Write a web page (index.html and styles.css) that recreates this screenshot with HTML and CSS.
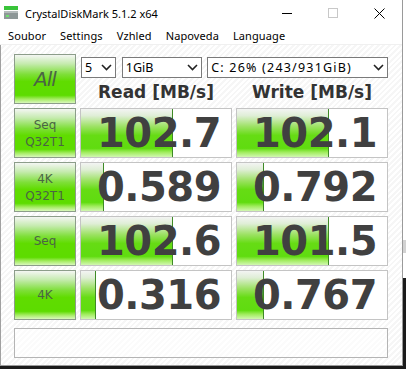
FILE: index.html
```html
<!DOCTYPE html>
<html lang="cs">
<head>
    <meta charset="UTF-8">
    <title>CrystalDiskMark 5.1.2 x64</title>
    <link rel="stylesheet" href="styles.css">
</head>
<body>
    <div class="window">
        <!-- Title bar -->
        <div class="titlebar">
            <svg class="app-icon" width="16" height="16" viewBox="0 0 16 16">
                <rect x="1" y="1" width="14" height="4" fill="#39c43a"/>
                <rect x="1" y="6" width="14" height="8" fill="#8e9898"/>
                <rect x="1" y="6" width="14" height="2" fill="#b5bcbc"/>
                <rect x="3" y="10" width="3" height="2" fill="#6fe06f"/>
            </svg>
            <span class="title">CrystalDiskMark 5.1.2 x64</span>
            <div class="controls">
                <span class="ctl">
                    <svg width="10" height="10" viewBox="0 0 10 10"><path d="M0 5.5H10" stroke="#000" stroke-width="1"/></svg>
                </span>
                <span class="ctl">
                    <svg width="10" height="10" viewBox="0 0 10 10"><rect x="0.5" y="0.5" width="9" height="9" fill="none" stroke="#c8c8c8"/></svg>
                </span>
                <span class="ctl">
                    <svg width="11" height="11" viewBox="0 0 11 11"><path d="M0.5 0.5L10.5 10.5M10.5 0.5L0.5 10.5" stroke="#000" stroke-width="1"/></svg>
                </span>
            </div>
        </div>

        <!-- Menu -->
        <div class="menubar">
            <span>Soubor</span>
            <span>Settings</span>
            <span>Vzhled</span>
            <span>Napoveda</span>
            <span>Language</span>
        </div>

        <!-- Benchmark panel -->
        <div class="client">
            <div class="bench">
                <div class="test all">All</div>
                <div class="top-right">
                    <div class="selects">
                        <div class="select count">5 <svg class="chev" width="11" height="7" viewBox="0 0 11 7"><path d="M1 1L5.5 5.5L10 1" fill="none" stroke="#222" stroke-width="1.6"/></svg></div>
                        <div class="select size">1GiB <svg class="chev" width="11" height="7" viewBox="0 0 11 7"><path d="M1 1L5.5 5.5L10 1" fill="none" stroke="#222" stroke-width="1.6"/></svg></div>
                        <div class="select drive">C: 26% (243/931GiB) <svg class="chev" width="11" height="7" viewBox="0 0 11 7"><path d="M1 1L5.5 5.5L10 1" fill="none" stroke="#222" stroke-width="1.6"/></svg></div>
                    </div>
                    <div class="heads">
                        <div>Read [MB/s]</div>
                        <div>Write [MB/s]</div>
                    </div>
                </div>

                <div class="test small">Seq<br>Q32T1</div>
                <div class="meter"><div class="bar" style="width: 61%"></div><span>102.7</span></div>
                <div class="meter"><div class="bar" style="width: 61%"></div><span>102.1</span></div>

                <div class="test small">4K<br>Q32T1</div>
                <div class="meter"><div class="bar" style="width: 15%"></div><span>0.589</span></div>
                <div class="meter"><div class="bar" style="width: 18%"></div><span>0.792</span></div>

                <div class="test small">Seq</div>
                <div class="meter"><div class="bar" style="width: 61%"></div><span>102.6</span></div>
                <div class="meter"><div class="bar" style="width: 61%"></div><span>101.5</span></div>

                <div class="test small">4K</div>
                <div class="meter"><div class="bar" style="width: 10%"></div><span>0.316</span></div>
                <div class="meter"><div class="bar" style="width: 18%"></div><span>0.767</span></div>

                <div class="comment"></div>
            </div>
        </div>
    </div>
</body>
</html>
```

FILE: styles.css
```css
* {
    margin: 0;
    padding: 0;
    box-sizing: border-box;
}

body {
    width: 406px;
    height: 369px;
    overflow: hidden;
    font-family: "Segoe UI", "Noto Sans", sans-serif;
    font-size: 11px;
    color: #000;
    /* desktop peeking out on the right and at the bottom */
    background: linear-gradient(#fff 0 240px, #d2d2d2 240px 253px, #fff 253px 278px, #1b1b1b 278px);
}

.window {
    width: 403px;
    height: 366px;
    background: #fff;
    border-right: 1px solid #9a9a9a;
    border-bottom: 1px solid #9a9a9a;
    display: flex;
    flex-direction: column;
}

/* Title bar */
.titlebar {
    flex-shrink: 0;
    height: 26px;
    display: flex;
    align-items: center;
}

.app-icon {
    margin-left: 3px;
}

.title {
    margin-left: 6px;
    flex: 1;
    font-size: 11px;
}

.controls {
    display: flex;
    align-self: stretch;
}

.ctl {
    width: 46px;
    display: flex;
    align-items: center;
    justify-content: center;
}

/* Menu */
.menubar {
    flex-shrink: 0;
    height: 19px;
    display: flex;
    align-items: center;
    padding-left: 1px;
    border-bottom: 1px solid #f0f0f0;
}

.menubar span {
    padding: 0 7px;
    letter-spacing: 0.1px;
}

/* Client area */
.client {
    flex: 1;
    border-left: 1px solid #a0a0a0;
    padding: 9px 0 0 13px;
    background: repeating-linear-gradient(135deg, #fff 0 2px, #f6f6f6 2px 4px);
}

.bench {
    display: grid;
    grid-template-columns: 62px 152px 152px;
    grid-template-rows: repeat(5, 50px) 34px;
    gap: 4px;
}

.test {
    border: 1px solid #8c9d8a;
    background: linear-gradient(#f4f6f3 0%, #c6ebb0 18%, #7fdf3a 40%, #60dc00 55%, #5ddc00 84%, #a6ec64 92%, #d9f8bc 100%);
    color: #4a6544;
    display: flex;
    align-items: center;
    justify-content: center;
    text-align: center;
    font-family: "DejaVu Sans", sans-serif;
}

.test.all {
    font-size: 20px;
    font-style: italic;
    letter-spacing: -1px;
}

.test.small {
    font-size: 12px;
    line-height: 17px;
    padding-top: 1px;
}

.top-right {
    grid-column: 2 / 4;
    display: flex;
    flex-direction: column;
}

.selects {
    display: flex;
    margin-top: 3px;
    height: 21px;
}

.select {
    border: 1px solid #7a7a7a;
    background: #fff;
    display: flex;
    align-items: center;
    justify-content: space-between;
    padding: 0 3px;
    font-size: 12.5px;
}

.select.count {
    width: 35px;
    margin-left: 1px;
}

.select.size {
    width: 81px;
    margin-left: 6px;
}

.select.drive {
    width: 182px;
    margin-left: 5px;
    letter-spacing: 1.2px;
}

.heads {
    flex: 1;
    display: grid;
    grid-template-columns: 152px 152px;
    gap: 4px;
    align-items: center;
    font-family: "DejaVu Sans", sans-serif;
    font-weight: bold;
    font-size: 17px;
    color: #333;
    text-align: center;
    padding-top: 1px;
}

.meter {
    position: relative;
    border: 1px solid #c4c4c4;
    background: #fff;
    display: flex;
    align-items: center;
    justify-content: flex-end;
    padding-right: 10px;
}

.bar {
    position: absolute;
    left: 0;
    top: 0;
    bottom: 0;
    background: linear-gradient(#f3f4f3 0%, #dfeed6 14%, #9ee266 36%, #66dc14 55%, #60dc10 82%, #9fec5c 90%, #d2f7b2 100%);
    border-right: 1px solid #3e8a26;
}

.meter span {
    position: relative;
    font-family: "DejaVu Sans", sans-serif;
    font-weight: bold;
    font-size: 40px;
    color: #404040;
    letter-spacing: -0.5px;
}

.comment {
    grid-column: 1 / 4;
    height: 30px;
    margin-top: 4px;
    border: 1px solid #b4b4b4;
    background: rgba(255, 255, 255, 0.6);
}
```
